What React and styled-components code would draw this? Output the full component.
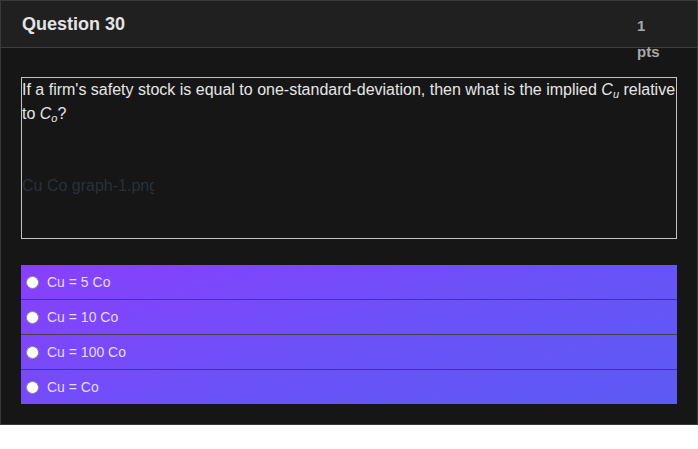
import styled, { createGlobalStyle } from "styled-components";

const GlobalStyle = createGlobalStyle`
  body {
    margin: 0;
    background: #ffffff;
    font-family: "Liberation Sans", Arial, sans-serif;
  }
`;

const options = ["Cu = 5 Co", "Cu = 10 Co", "Cu = 100 Co", "Cu = Co"];

const App = () => {
  return (
    <>
      <GlobalStyle />
      <Card>
        <Header>
          <Title>Question 30</Title>
          <Points>1 pts</Points>
        </Header>
        <Body>
          <QuestionBox>
            <QuestionText>
              If a firm's safety stock is equal to one-standard-deviation, then
              what is the implied <i>C<sub>u</sub></i> relative to{" "}
              <i>C<sub>o</sub></i>?
            </QuestionText>
            <BrokenImage>Cu Co graph-1.png</BrokenImage>
          </QuestionBox>
          <Answers>
            {options.map((opt) => (
              <Answer key={opt}>
                <Radio type="radio" name="q30" />
                <span>{opt}</span>
              </Answer>
            ))}
          </Answers>
        </Body>
      </Card>
    </>
  );
};
export default App;

const Card = styled.div`
  width: 698px;
  box-sizing: border-box;
  border: 1px solid #3a3a3a;
  background: #161616;
`;

const Header = styled.div`
  height: 47px;
  box-sizing: border-box;
  display: flex;
  justify-content: space-between;
  align-items: flex-start;
  padding: 12px 34px 0 21px;
  background: #202020;
  border-bottom: 1px solid #3e3e3e;
`;

const Title = styled.div`
  color: #e4e4e4;
  font-size: 18px;
  font-weight: bold;
  line-height: 22px;
`;

const Points = styled.div`
  width: 26px;
  color: #a8a8a8;
  font-size: 15px;
  font-weight: bold;
  line-height: 26px;
`;

const Body = styled.div`
  padding: 29px 20px 20px 20px;
`;

const QuestionBox = styled.div`
  height: 162px;
  box-sizing: border-box;
  border: 1px solid #c4c4c4;
  margin-bottom: 26px;
`;

const QuestionText = styled.div`
  color: #e6e6e6;
  font-size: 16px;
  line-height: 24px;

  sub {
    font-size: 11px;
    vertical-align: -3px;
    line-height: 0;
  }
`;

const BrokenImage = styled.div`
  margin-top: 50px;
  width: 132px;
  overflow: hidden;
  white-space: nowrap;
  color: #27323d;
  font-size: 16px;
  line-height: 20px;
`;

const Answers = styled.div`
  display: flex;
  flex-direction: column;
  background: linear-gradient(160deg, #8a3ffc 0%, #6a52f8 55%, #5c5af5 100%);
`;

const Answer = styled.label`
  height: 35px;
  box-sizing: border-box;
  display: flex;
  align-items: center;
  gap: 8px;
  padding-left: 5px;
  color: #e2dcff;
  font-size: 14px;
  border-top: 1px solid #444444;

  &:first-child {
    border-top: none;
    height: 34px;
  }
`;

const Radio = styled.input`
  appearance: none;
  width: 13px;
  height: 13px;
  margin: 0;
  border-radius: 50%;
  background: #ffffff;
  border: 1px solid #8a8a8a;
`;
